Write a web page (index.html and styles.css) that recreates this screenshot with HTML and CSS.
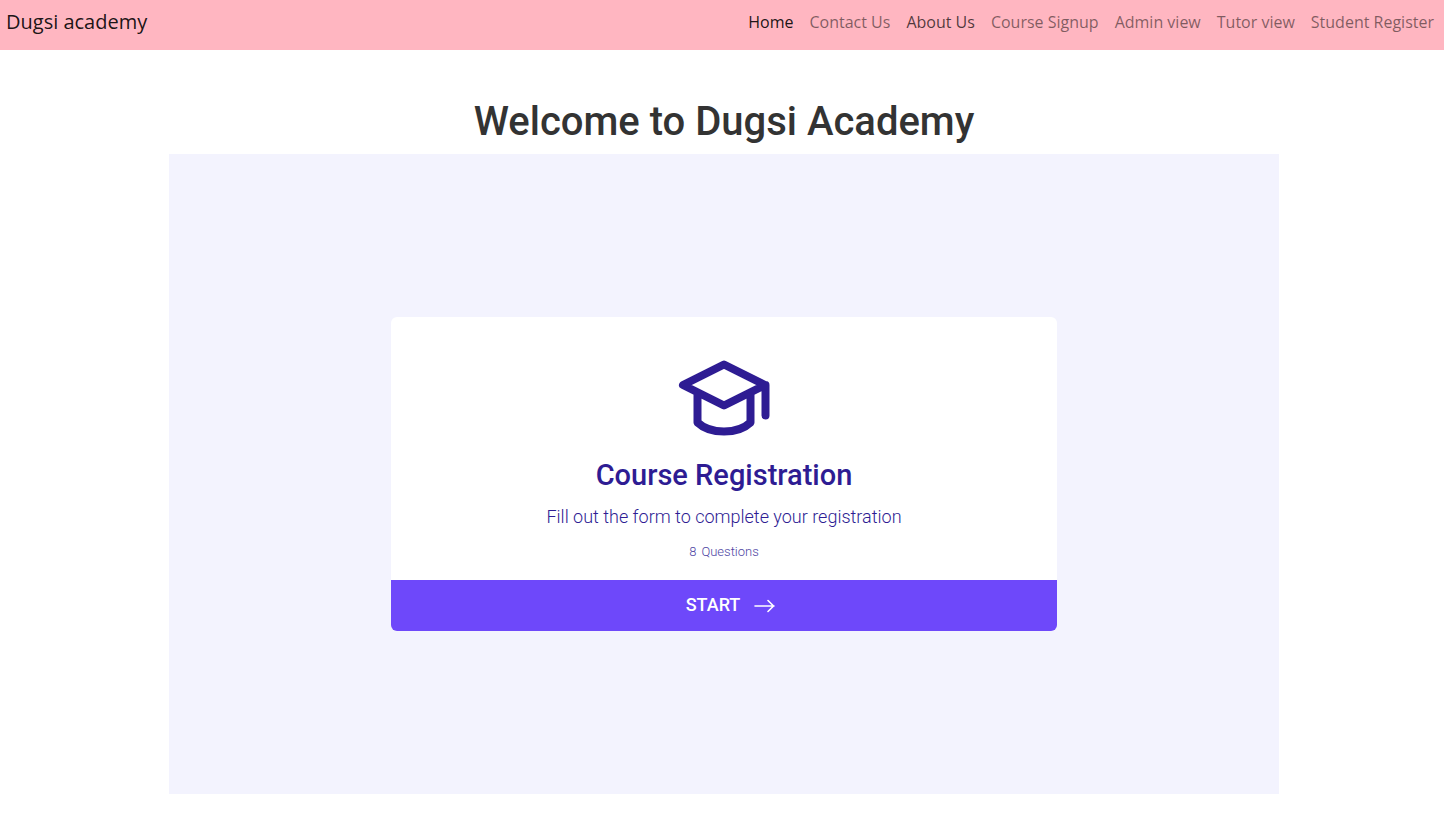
FILE: index.html
```html
<!DOCTYPE html>
<html lang="en">
<head>
<meta charset="utf-8">
<title>Dugsi academy</title>
<link rel="stylesheet" href="styles.css">
</head>
<body>
<header class="navbar">
  <a class="brand" href="#">Dugsi academy</a>
  <nav class="nav">
    <a class="nav-link active" href="#">Home</a>
    <a class="nav-link" href="#">Contact Us</a>
    <a class="nav-link hovered" href="#">About Us</a>
    <a class="nav-link" href="#">Course Signup</a>
    <a class="nav-link" href="#">Admin view</a>
    <a class="nav-link" href="#">Tutor view</a>
    <a class="nav-link" href="#">Student Register</a>
  </nav>
</header>
<main class="page">
  <div class="container">
    <h1 class="title">Welcome to Dugsi Academy</h1>
    <section class="stage">
      <div class="card">
        <div class="card-body">
          <svg class="cap" viewBox="0 0 92 76" aria-hidden="true">
            <path d="M46 4.500 87 25 46 45.500 5 25ZM19.500 33V62.500Q29 71.500 46 71.500T72.500 62.500V33M87.500 25V55.500"/>
          </svg>
          <h2 class="card-title">Course Registration</h2>
          <p class="lead">Fill out the form to complete your registration</p>
          <p class="count"><span>8</span><span>Questions</span></p>
        </div>
        <button class="start" type="button">START
          <svg class="arrow" viewBox="0 0 22 16" aria-hidden="true"><path stroke-width="1.600" d="M1 9H20M14 3.500 19.500 9 14 14.500"/></svg>
        </button>
      </div>
    </section>
  </div>
</main>
</body>
</html>
```

FILE: styles.css
```css
* { box-sizing: border-box; }
body { margin: 0; background: #fff; font-family: Roboto, sans-serif; }
.navbar {
  display: flex;
  justify-content: space-between;
  align-items: flex-start;
  min-height: 50px;
  padding: 7px 2px 0 6px;
  background: #ffb6c1;
  font-family: "Open Sans", sans-serif;
}
.brand { color: rgba(0, 0, 0, .9); font-size: 20px; line-height: 30px; text-decoration: none; }
.nav { display: flex; }
.nav-link { padding: 3px 8px; color: rgba(0, 0, 0, .5); font-size: 16px; line-height: 24px; text-decoration: none; }
.nav-link.active { color: rgba(0, 0, 0, .9); }
.nav-link.hovered { color: rgba(0, 0, 0, .7); }
.page { padding: 48px 15px 16px 19px; }
.container { max-width: 1110px; margin: 0 auto; }
.title { margin: 0 0 8px; color: #333; font-size: 40px; font-weight: 500; line-height: 48px; text-align: center; }
.stage { display: flex; align-items: center; justify-content: center; min-height: 640px; background: #f3f3fe; }
.card { width: 60%; overflow: hidden; border-radius: 6px; background: #fff; color: #2e1c93; }
.card-body { display: flex; flex-direction: column; align-items: center; padding: 43px 24px 20px; }
.cap { width: 92px; height: 76px; fill: none; stroke: currentColor; stroke-width: 8; stroke-linejoin: round; stroke-linecap: round; }
.card-title { margin: 20px 0 0; font-size: 29px; font-weight: 500; line-height: 38px; }
.lead { margin: 10px 0 0; font-size: 18px; font-weight: 300; line-height: 26px; }
.count { display: flex; gap: 5px; margin: 14px 0 0; font-size: 13px; font-weight: 300; line-height: 16px; opacity: .85; }
.start { display: flex; align-items: center; justify-content: center; gap: 14px; width: 100%; padding: 13px 0 14px 14px; border: 0; background: #6e48fa; color: #fff; font: 500 18px/24px Roboto, sans-serif; }
.arrow { width: 22px; height: 16px; fill: none; stroke: currentColor; stroke-linecap: round; }
```
